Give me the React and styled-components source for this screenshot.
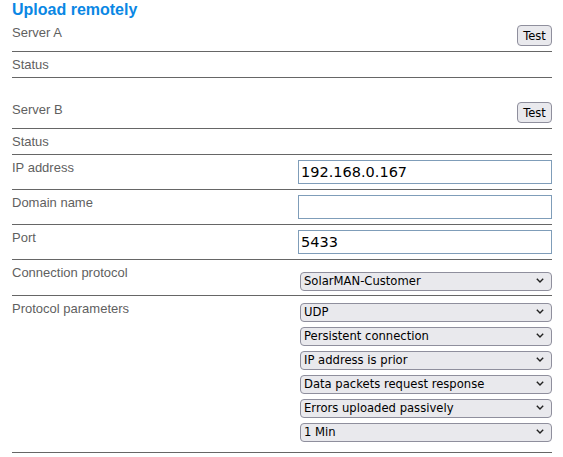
import styled, { createGlobalStyle } from 'styled-components';

const GlobalStyle = createGlobalStyle`
  html, body {
    margin: 0;
    padding: 0;
    background: #ffffff;
  }
  body {
    font-family: "Liberation Sans", Arial, sans-serif;
  }
`;

const Page = styled.div`
  width: 540px;
  padding: 1px 0 0 12px;
`;

const Title = styled.h2`
  margin: 0;
  font-size: 16px;
  line-height: 18px;
  font-weight: bold;
  color: #0a87e4;
`;

const Row = styled.div`
  display: flex;
  align-items: flex-start;
  justify-content: space-between;
  padding: ${(p) => p.$pad || '5px 0'};
  margin-top: ${(p) => p.$gap || 0}px;
  border-bottom: 1px solid #666666;
`;

const Label = styled.div`
  width: 286px;
  flex: none;
  font-size: 13px;
  line-height: 15px;
  color: #5f5f5f;
`;

const Controls = styled.div`
  width: 254px;
  display: flex;
  flex-direction: column;
  align-items: flex-end;
  gap: 5px;
  padding-top: ${(p) => p.$top || 0}px;
  padding-bottom: ${(p) => p.$bottom || 0}px;
`;

const Button = styled.button`
  width: 35px;
  height: 21px;
  padding: 0;
  background: #e9e9ed;
  border: 1px solid #8f8f9d;
  border-radius: 4px;
  font-family: "DejaVu Sans", Tahoma, sans-serif;
  font-size: 11.5px;
  color: #000000;
`;

const TextInput = styled.input`
  box-sizing: border-box;
  width: 254px;
  height: 24px;
  margin: 0;
  padding: 0 2px;
  border: 1px solid #7f9db9;
  background: #ffffff;
  font-family: "DejaVu Sans", Tahoma, sans-serif;
  font-size: 14.5px;
  color: #000000;
  outline: none;
`;

const SelectWrap = styled.div`
  position: relative;
  width: 252px;
  height: 19px;
`;

const Select = styled.select`
  appearance: none;
  box-sizing: border-box;
  width: 100%;
  height: 100%;
  margin: 0;
  padding: 0 20px 0 3px;
  background: #e9e9ed;
  border: 1px solid #8f8f9d;
  border-radius: 4px;
  font-family: "DejaVu Sans", Tahoma, sans-serif;
  font-size: 11.6px;
  color: #000000;
  outline: none;
`;

const Chevron = styled.svg`
  position: absolute;
  right: 8px;
  top: 7px;
  pointer-events: none;
`;

const Dropdown = ({ value }) => (
  <SelectWrap>
    <Select defaultValue={value}>
      <option>{value}</option>
    </Select>
    <Chevron width="8" height="5" viewBox="0 0 8 5">
      <polyline points="0.8,0.8 4,4 7.2,0.8" fill="none" stroke="#222" strokeWidth="1.4" />
    </Chevron>
  </SelectWrap>
);

const params = [
  'UDP',
  'Persistent connection',
  'IP address is prior',
  'Data packets request response',
  'Errors uploaded passively',
  '1 Min',
];

export default function App() {
  return (
    <>
      <GlobalStyle />
      <Page>
        <Title>Upload remotely</Title>

        <Row $pad="6px 0 5px">
          <Label>Server A</Label>
          <Button>Test</Button>
        </Row>
        <Row>
          <Label>Status</Label>
        </Row>

        <Row $pad="6px 0 5px" $gap={18}>
          <Label>Server B</Label>
          <Button>Test</Button>
        </Row>
        <Row>
          <Label>Status</Label>
        </Row>

        <Row>
          <Label>IP address</Label>
          <Controls>
            <TextInput defaultValue="192.168.0.167" />
          </Controls>
        </Row>
        <Row>
          <Label>Domain name</Label>
          <Controls>
            <TextInput defaultValue="" />
          </Controls>
        </Row>
        <Row>
          <Label>Port</Label>
          <Controls>
            <TextInput defaultValue="5433" />
          </Controls>
        </Row>
        <Row>
          <Label>Connection protocol</Label>
          <Controls $top={6}>
            <Dropdown value="SolarMAN-Customer" />
          </Controls>
        </Row>
        <Row>
          <Label>Protocol parameters</Label>
          <Controls $top={1} $bottom={6}>
            {params.map((p) => (
              <Dropdown key={p} value={p} />
            ))}
          </Controls>
        </Row>
      </Page>
    </>
  );
}
